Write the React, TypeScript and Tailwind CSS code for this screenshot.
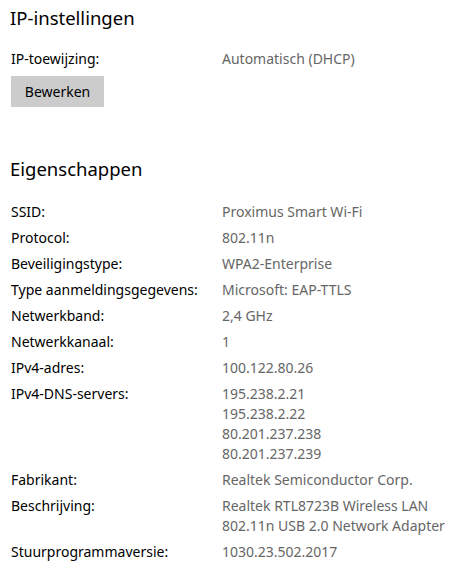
import React from "react";

const rows: [string, string[]][] = [
  ["SSID:", ["Proximus Smart Wi-Fi"]],
  ["Protocol:", ["802.11n"]],
  ["Beveiligingstype:", ["WPA2-Enterprise"]],
  ["Type aanmeldingsgegevens:", ["Microsoft: EAP-TTLS"]],
  ["Netwerkband:", ["2,4 GHz"]],
  ["Netwerkkanaal:", ["1"]],
  ["IPv4-adres:", ["100.122.80.26"]],
  ["IPv4-DNS-servers:", ["195.238.2.21", "195.238.2.22", "80.201.237.238", "80.201.237.239"]],
  ["Fabrikant:", ["Realtek Semiconductor Corp."]],
  ["Beschrijving:", ["Realtek RTL8723B Wireless LAN", "802.11n USB 2.0 Network Adapter"]],
  ["Stuurprogrammaversie:", ["1030.23.502.2017"]],
];

export default function App() {
  return (
    <div
      className="w-[463px] h-[572px] bg-white overflow-hidden pl-[11px] text-black"
      style={{ fontFamily: '"Noto Sans", "Open Sans", sans-serif' }}
    >
      <div className="h-[36px] leading-[36px] text-[18.5px] -ml-[1px]">IP-instellingen</div>
      <div className="mt-[13px] flex text-[14px] leading-[20px]">
        <div className="w-[211px]">IP-toewijzing:</div>
        <div className="text-[#666666]">Automatisch (DHCP)</div>
      </div>
      <div className="mt-[7px] w-[93px] h-[31px] bg-[#cccccc] flex items-center justify-center text-[14px]">
        Bewerken
      </div>
      <div className="mt-[44px] h-[36px] leading-[36px] text-[18.5px] -ml-[1px]">Eigenschappen</div>
      <div className="mt-[15px] flex flex-col gap-[6px] text-[14px] leading-[20px]">
        {rows.map(([label, vals]) => (
          <div key={label} className="flex">
            <div className="w-[211px] shrink-0">{label}</div>
            <div className="flex flex-col text-[#666666]">
              {vals.map((v) => (
                <div key={v}>{v}</div>
              ))}
            </div>
          </div>
        ))}
      </div>
    </div>
  );
}
